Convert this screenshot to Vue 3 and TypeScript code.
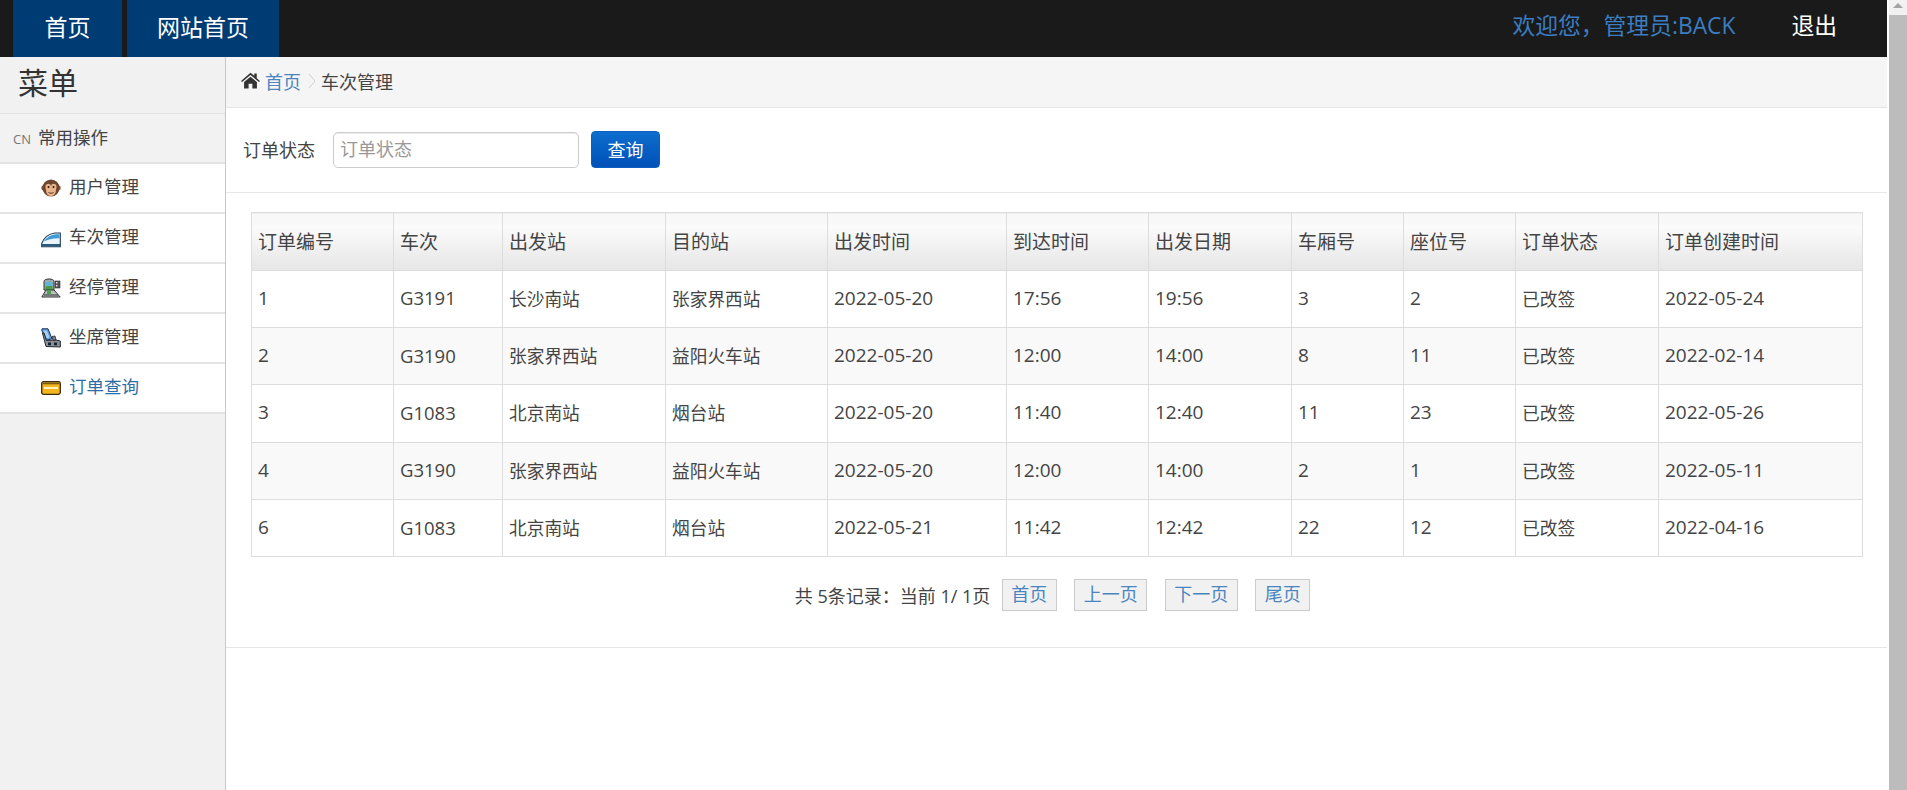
<script setup lang="ts">
interface OrderRow {
  id: number
  train: string
  from: string
  to: string
  depart: string
  arrive: string
  date: string
  car: number
  seat: number
  status: string
  created: string
}

const menu = [
  { name: '用户管理', icon: 'monkey' },
  { name: '车次管理', icon: 'train' },
  { name: '经停管理', icon: 'station' },
  { name: '坐席管理', icon: 'seat' },
  { name: '订单查询', icon: 'card', active: true },
]

const columns = ['订单编号', '车次', '出发站', '目的站', '出发时间', '到达时间', '出发日期', '车厢号', '座位号', '订单状态', '订单创建时间']
const colWidths = [142, 109, 163, 162, 179, 142, 143, 112, 112, 143, 204]

const rows: OrderRow[] = [
  { id: 1, train: 'G3191', from: '长沙南站', to: '张家界西站', depart: '2022-05-20', arrive: '17:56', date: '19:56', car: 3, seat: 2, status: '已改签', created: '2022-05-24' },
  { id: 2, train: 'G3190', from: '张家界西站', to: '益阳火车站', depart: '2022-05-20', arrive: '12:00', date: '14:00', car: 8, seat: 11, status: '已改签', created: '2022-02-14' },
  { id: 3, train: 'G1083', from: '北京南站', to: '烟台站', depart: '2022-05-20', arrive: '11:40', date: '12:40', car: 11, seat: 23, status: '已改签', created: '2022-05-26' },
  { id: 4, train: 'G3190', from: '张家界西站', to: '益阳火车站', depart: '2022-05-20', arrive: '12:00', date: '14:00', car: 2, seat: 1, status: '已改签', created: '2022-05-11' },
  { id: 6, train: 'G1083', from: '北京南站', to: '烟台站', depart: '2022-05-21', arrive: '11:42', date: '12:42', car: 22, seat: 12, status: '已改签', created: '2022-04-16' },
]

const pages = ['首页', '上一页', '下一页', '尾页']
</script>

<template>
  <div class="page">
    <div class="main">
      <header class="navbar">
        <nav class="tabs">
          <a class="tab tab-home">首页</a>
          <a class="tab tab-site">网站首页</a>
        </nav>
        <div class="user">
          <span class="welcome">欢迎您，管理员:BACK</span>
          <a class="logout">退出</a>
        </div>
      </header>

      <div class="body">
        <aside class="sidebar">
          <div class="side-title">菜单</div>
          <div class="side-group"><small>CN</small>常用操作</div>
          <ul class="side-menu">
            <li v-for="item in menu" :key="item.name" :class="{ active: item.active }">
              <svg v-if="item.icon === 'monkey'" class="icon" viewBox="0 0 20 20">
                <circle cx="2.6" cy="10" r="2.4" fill="#8a5a3c" />
                <circle cx="17.4" cy="10" r="2.4" fill="#8a5a3c" />
                <circle cx="10" cy="10" r="8.6" fill="#6d4630" />
                <path d="M4.5 9a2.8 2.8 0 0 1 5.5-1 2.8 2.8 0 0 1 5.5 1c0 1.600-.6 2.500-.6 3.500 0 3-2 5.500-4.900 5.500s-4.900-2.500-4.900-5.500c0-1-.6-1.900-.6-3.500z" fill="#e8b48c" />
                <circle cx="7.500" cy="9" r="1" fill="#2b1a10" />
                <circle cx="12.500" cy="9" r="1" fill="#2b1a10" />
                <path d="M7.500 14.500c1.500 1 3.500 1 5 0" stroke="#5a3420" stroke-width="1" fill="none" />
              </svg>
              <svg v-else-if="item.icon === 'train'" class="icon" viewBox="0 0 20 20">
                <path d="M.7 18.800V15.500C3 9.500 8 5.800 14 5h5.300v13.800z" fill="#eaf4fb" stroke="#1f3a52" stroke-width="1.100" />
                <path d="M2.500 13.500C5.500 9.500 10 7 15 6.300h3.500v3.900C12 10 7 11.300 2.500 13.500z" fill="#3f9ad6" />
                <path d="M1 16h18v2.500H1z" fill="#2c5a80" />
              </svg>
              <svg v-else-if="item.icon === 'station'" class="icon" viewBox="0 0 20 20">
                <path d="M3 3.500C3 1.800 5 1 8 1s5 .8 5 2.500V12H3z" fill="#9fa8ad" stroke="#333" stroke-width="1" />
                <rect x="4.500" y="4" width="7" height="4" fill="#5bb7d6" />
                <rect x="4.500" y="8" width="7" height="4" fill="#4a9a4a" />
                <rect x="14" y="3" width="5" height="7" fill="#555" stroke="#333" stroke-width=".6" />
                <rect x="15" y="4" width="1.400" height="1.400" fill="#eee" />
                <rect x="15" y="7" width="1.400" height="1.400" fill="#eee" />
                <path d="M5 12 .8 19h18.400L13 12z" fill="#b8bfc2" stroke="#333" stroke-width="1" />
                <path d="M6 12h4v4H6z" fill="#4f9d4f" />
                <path d="M3 17h14" stroke="#333" stroke-width="1" />
              </svg>
              <svg v-else-if="item.icon === 'seat'" class="icon" viewBox="0 0 20 20">
                <path d="M.8 2.500 1 .8 7 .8l4 10-5.500 1.500z" fill="#5a9fe0" stroke="#1f3450" stroke-width="1" />
                <path d="M2.300 2.500h3.500l2.800 7-3 .8z" fill="#a6d0f2" />
                <path d="M1.500 5 5 18.500 19.300 19v-6L15 12l-9.500.500L3 5z" fill="#8a8f96" stroke="#1f2933" stroke-width="1" />
                <rect x="7" y="14.500" width="3" height="2.800" fill="#15202b" />
                <rect x="13" y="14.500" width="3" height="2.800" fill="#15202b" />
                <path d="M11 8.500l3-.5 1 4-3 .3z" fill="#7c8289" stroke="#1f2933" stroke-width=".8" />
              </svg>
              <svg v-else class="icon" viewBox="0 0 20 20">
                <rect x=".7" y="3.700" width="18.600" height="12.600" rx="1.800" fill="#f3b61f" stroke="#3a2c10" stroke-width="1.300" />
                <rect x="1.400" y="4.500" width="17.200" height="1.800" fill="#7a5a18" />
                <rect x="3" y="9" width="14" height="2" fill="#fff2c0" />
              </svg>
              <span>{{ item.name }}</span>
            </li>
          </ul>
        </aside>

        <section class="content">
          <div class="crumbs">
            <svg class="home" viewBox="0 0 20 18">
              <path d="M10 .8 0 9.400l1 1.300L10 3.200l9 7.500 1-1.300-3.400-2.900V1.600h-2.600v2.500z" fill="#333" />
              <path d="M10 5 3.200 10.700V17.500h4.800v-5h4v5h4.800v-6.800z" fill="#333" />
            </svg>
            <a class="crumb-link">首页</a>
            <svg class="chevron" viewBox="0 0 8 16">
              <path d="M1 1l6 7-6 7" fill="none" stroke="#cfcfcf" stroke-width="1" />
            </svg>
            <span>车次管理</span>
          </div>

          <form class="search" @submit.prevent>
            <label for="status">订单状态</label>
            <input id="status" type="text" placeholder="订单状态">
            <button type="button">查询</button>
          </form>

          <div class="table-wrap">
            <table>
              <colgroup>
                <col v-for="(w, i) in colWidths" :key="i" :style="{ width: w + 'px' }">
              </colgroup>
              <thead>
                <tr>
                  <th v-for="c in columns" :key="c">{{ c }}</th>
                </tr>
              </thead>
              <tbody>
                <tr v-for="r in rows" :key="r.id">
                  <td class="num">{{ r.id }}</td>
                  <td class="code">{{ r.train }}</td>
                  <td>{{ r.from }}</td>
                  <td>{{ r.to }}</td>
                  <td class="num">{{ r.depart }}</td>
                  <td class="num">{{ r.arrive }}</td>
                  <td class="num">{{ r.date }}</td>
                  <td class="num">{{ r.car }}</td>
                  <td class="num">{{ r.seat }}</td>
                  <td>{{ r.status }}</td>
                  <td class="num">{{ r.created }}</td>
                </tr>
              </tbody>
            </table>
          </div>

          <div class="pager">
            <span class="pager-text">共 5条记录：当前 1/ 1页</span>
            <a v-for="p in pages" :key="p" class="pager-btn">{{ p }}</a>
          </div>
        </section>
      </div>
    </div>

    <div class="scrollbar">
      <div class="arrow"></div>
      <div class="thumb"></div>
    </div>
  </div>
</template>

<style>
html, body {
  margin: 0;
  height: 100%;
  overflow: hidden;
  background: #fff;
}
</style>

<style scoped>
.page {
  display: flex;
  height: 790px;
  font-family: "Open Sans", "Noto Sans CJK SC", sans-serif;
  font-size: 18px;
  color: #444;
}

.main {
  width: 1887px;
  display: flex;
  flex-direction: column;
}

.navbar {
  height: 57px;
  background: #1a1a1a;
  display: flex;
  justify-content: space-between;
  flex-shrink: 0;
}

.tabs {
  display: flex;
  gap: 5px;
  padding-left: 13px;
}

.tab {
  display: flex;
  align-items: center;
  justify-content: center;
  background: #003c74;
  color: #fff;
  font-size: 23px;
  padding-bottom: 6px;
  box-sizing: border-box;
}

.tab-home {
  width: 109px;
}

.tab-site {
  width: 152px;
}

.user {
  display: flex;
  align-items: center;
  font-size: 22.800px;
  padding-bottom: 9px;
  padding-right: 50px;
  gap: 56px;
}

.welcome {
  color: #3a7dc0;
}

.logout {
  color: #fff;
}

.body {
  flex: 1;
  display: flex;
  min-height: 0;
}

.sidebar {
  width: 226px;
  flex-shrink: 0;
  background: #f1f1f1;
  border-right: 1px solid #c8c8c8;
  box-sizing: border-box;
}

.side-title {
  height: 56px;
  line-height: 52px;
  padding-left: 18px;
  font-size: 30px;
  color: #333;
  border-bottom: 1px solid #e2e2e2;
}

.side-group {
  height: 48px;
  line-height: 46px;
  padding-left: 13px;
  font-size: 17.5px;
  color: #444;
  background: #f2f2f2;
}

.side-group small {
  font-size: 13px;
  color: #777;
  margin-right: 7px;
}

.side-menu {
  list-style: none;
  margin: 0;
  padding: 0;
  border-top: 2px solid #e4e4e4;
}

.side-menu li {
  height: 50px;
  box-sizing: border-box;
  background: #fff;
  border-bottom: 2px solid #e4e4e4;
  display: flex;
  align-items: center;
  padding-left: 41px;
  gap: 8px;
  font-size: 17.5px;
}

.side-menu li span {
  margin-bottom: 5px;
}

.side-menu li.active {
  color: #2e6da4;
}

.icon {
  width: 20px;
  height: 20px;
  flex-shrink: 0;
}

.content {
  flex: 1;
  min-width: 0;
}

.crumbs {
  padding: 0 0 3px 15px;
  height: 47px;
  display: flex;
  align-items: center;
  background: #f5f5f5;
  border-bottom: 1px solid #e5e5e5;
  color: #444;
}

.home {
  width: 19px;
  height: 17px;
  margin-right: 5px;
}

.crumb-link {
  color: #4a85bf;
}

.chevron {
  width: 8px;
  height: 16px;
  margin: 0 5px 0 7px;
}

.search {
  height: 84px;
  border-bottom: 1px solid #e8e8e8;
  display: flex;
  align-items: center;
  padding-left: 17px;
}

.search label {
  margin: 0 18px 2px 0;
}

.search input {
  width: 246px;
  height: 36px;
  box-sizing: border-box;
  border: 1px solid #ccc;
  border-radius: 5px;
  padding: 0 6px 2px;
  font: inherit;
  color: #444;
  box-shadow: inset 0 1px 1px rgba(0, 0, 0, 0.08);
}

.search input::placeholder {
  color: #999;
}

.search button {
  width: 69px;
  height: 37px;
  margin: 0 0 2px 12px;
  border: 1px solid #0a5fc0;
  border-radius: 4px;
  font: inherit;
  color: #fff;
  background: linear-gradient(#0c6ecd, #0050b8);
  padding: 0;
}

.table-wrap {
  padding: 19px 25px 0;
}

table {
  width: 1611px;
  table-layout: fixed;
  border-collapse: collapse;
  font-size: 17.700px;
}

th, td {
  border: 1px solid #ddd;
  padding: 0 6px 2px;
  font-weight: 400;
  text-align: left;
  height: 57.400px;
  box-sizing: border-box;
  white-space: nowrap;
}

th {
  height: 57.500px;
  padding-bottom: 0;
  font-size: 19px;
  background: linear-gradient(#f8f8f8 0, #f8f8f8 18%, #fbfbfb 22%, #e6e6e6 100%);
}

td.num {
  font-size: 19px;
}

td.code {
  font-size: 18.500px;
}

tbody tr:nth-child(even) td {
  background: #f9f9f9;
}

.pager {
  display: flex;
  align-items: center;
  justify-content: center;
  padding: 22px 8px 36px 0;
  border-bottom: 1px solid #e5e5e5;
  gap: 17.500px;
}

.pager-text {
  margin-right: -6px;
}

.pager-btn {
  height: 32px;
  line-height: 29px;
  box-sizing: border-box;
  padding: 0 8.500px;
  background: #f1f1f1;
  border: 1px solid #ccc;
  color: #4a85bf;
}

.scrollbar {
  width: 18px;
  margin-left: 2px;
  background: #f1f1f1;
  display: flex;
  flex-direction: column;
  flex-shrink: 0;
}

.arrow {
  height: 15px;
  position: relative;
}

.arrow::before {
  content: "";
  position: absolute;
  left: 4px;
  top: 3px;
  border-left: 5px solid transparent;
  border-right: 5px solid transparent;
  border-bottom: 5px solid #a3a3a3;
}

.thumb {
  flex: 1;
  background: #bcbcbc;
}
</style>
